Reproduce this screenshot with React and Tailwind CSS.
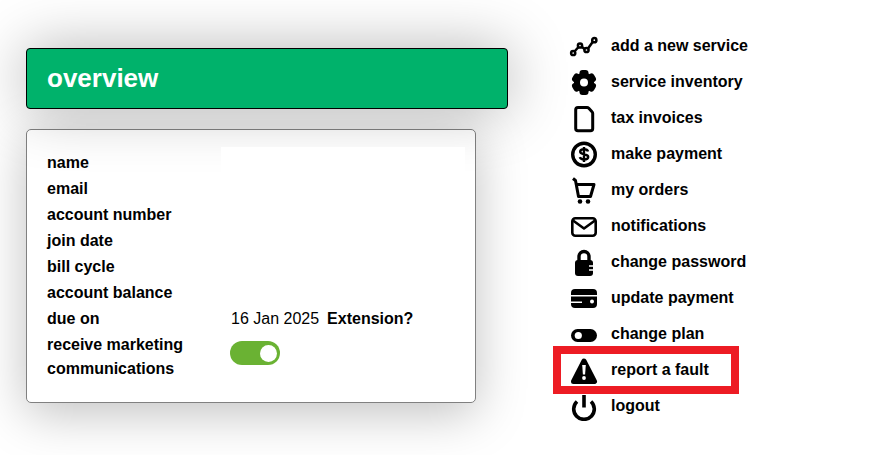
import { useState } from "react";

const iconClass = "w-[30px] h-[30px] text-black shrink-0";

const ChartIcon = () => (
  <svg viewBox="0 0 30 30" className={iconClass} fill="none" stroke="currentColor" strokeWidth="2.500">
    <circle cx="4.200" cy="22" r="2.100" />
    <circle cx="11" cy="14.500" r="2.100" />
    <circle cx="17.500" cy="19" r="2.100" />
    <circle cx="25.300" cy="9.200" r="2.100" />
    <path d="M5.500 20.500 9.500 16M13 16l2.500 2M19 17.500 24 10.500" />
  </svg>
);

const GearIcon = () => (
  <svg viewBox="0 0 30 30" className={iconClass}>
    <g fill="currentColor">
      <circle cx="15" cy="15.500" r="10" />
      <rect x="10.500" y="3" width="9" height="25" rx="3" />
      <rect x="10.500" y="3" width="9" height="25" rx="3" transform="rotate(60 15 15.500)" />
      <rect x="10.500" y="3" width="9" height="25" rx="3" transform="rotate(120 15 15.500)" />
    </g>
    <circle cx="15" cy="15.500" r="4" fill="#fff" />
  </svg>
);

const FileIcon = () => (
  <svg viewBox="0 0 30 30" className={iconClass} fill="none" stroke="currentColor" strokeWidth="3" strokeLinejoin="round">
    <path d="M9 4.500h9c.8 0 1.300.3 1.800.8l3.200 3.400c.5.5.7 1 .7 1.700v15c0 1.500-.8 2.300-2.200 2.300H9c-1.500 0-2.300-.8-2.300-2.300V6.800c0-1.500.8-2.300 2.300-2.300z" />
  </svg>
);

const DollarIcon = () => (
  <svg viewBox="0 0 30 30" className={iconClass}>
    <circle cx="15" cy="15.500" r="11.300" fill="none" stroke="currentColor" strokeWidth="3.400" />
    <path
      d="M19 12.500c-.4-1.500-1.900-2.300-4-2.300-2.300 0-3.800 1-3.800 2.500 0 3.500 8 1.600 8 5.300 0 1.600-1.700 2.500-4.200 2.500-2.200 0-3.700-.8-4.200-2.300M15 8v15"
      fill="none"
      stroke="currentColor"
      strokeWidth="2.400"
    />
  </svg>
);

const CartIcon = () => (
  <svg viewBox="0 0 30 30" className={iconClass}>
    <path d="M4 3.500 6.500 5.500 9.500 21.500h12L25 9.500H7.500" fill="none" stroke="currentColor" strokeWidth="3" strokeLinejoin="round" />
    <circle cx="11" cy="26.500" r="2.300" fill="currentColor" />
    <circle cx="19" cy="26.500" r="2.300" fill="currentColor" />
  </svg>
);

const MailIcon = () => (
  <svg viewBox="0 0 30 30" className={iconClass} fill="none" stroke="currentColor" strokeWidth="2.600" strokeLinejoin="round">
    <rect x="3.300" y="7.300" width="23.400" height="17.400" rx="3" />
    <path d="M4 9.500 15 17.500 26 9.500" />
  </svg>
);

const LockIcon = () => (
  <svg viewBox="0 0 30 30" className={iconClass}>
    <path d="M10 15V9.500a5 5 0 0 1 10 0V15" fill="none" stroke="currentColor" strokeWidth="3.400" />
    <rect x="6" y="13" width="18" height="16" rx="3" fill="currentColor" />
    <path d="M20 19h4M20 23h4" stroke="#fff" strokeWidth="1.300" />
  </svg>
);

const CardIcon = () => (
  <svg viewBox="0 0 30 30" className={iconClass}>
    <rect x="2" y="6" width="26" height="19" rx="4" fill="currentColor" />
    <path d="M2 12.800h26M2 19.300h11" stroke="#fff" strokeWidth="1.600" />
    <circle cx="23" cy="18.500" r="2" fill="#fff" />
  </svg>
);

const ToggleIcon = () => (
  <svg viewBox="0 0 30 30" className={iconClass}>
    <rect x="2" y="10" width="26" height="13" rx="6.500" fill="currentColor" />
    <circle cx="9.300" cy="16.500" r="3.600" fill="#fff" />
  </svg>
);

const WarningIcon = () => (
  <svg viewBox="0 0 30 30" className={iconClass}>
    <path d="M15 6 25.500 26.500H4.500Z" fill="currentColor" stroke="currentColor" strokeWidth="5" strokeLinejoin="round" />
    <path d="M13.200 10h3.600l-.7 9.500h-2.200z" fill="#fff" />
    <circle cx="15" cy="23" r="1.900" fill="#fff" />
  </svg>
);

const PowerIcon = () => (
  <svg viewBox="0 0 30 30" className={iconClass} fill="none" stroke="currentColor" strokeWidth="3.600">
    <path d="M15 4v12.500" />
    <path d="M8 10.500A10.300 10.300 0 1 0 22 10.500" />
  </svg>
);

const menu = [
  { label: "add a new service", icon: ChartIcon },
  { label: "service inventory", icon: GearIcon },
  { label: "tax invoices", icon: FileIcon },
  { label: "make payment", icon: DollarIcon },
  { label: "my orders", icon: CartIcon },
  { label: "notifications", icon: MailIcon },
  { label: "change password", icon: LockIcon },
  { label: "update payment", icon: CardIcon },
  { label: "change plan", icon: ToggleIcon },
  { label: "report a fault", icon: WarningIcon, flagged: true },
  { label: "logout", icon: PowerIcon },
];

const labels = [
  "name",
  "email",
  "account number",
  "join date",
  "bill cycle",
  "account balance",
];

export default function App() {
  const [marketing, setMarketing] = useState(true);

  return (
    <div className="w-[873px] h-[455px] overflow-hidden bg-white flex font-['Liberation_Sans',Arial,sans-serif] text-[16px] text-black">

      {/* Left column */}
      <div className="w-[482px] ml-[26px] pt-[48px] shrink-0">

        <div className="relative z-10 h-[61px] flex items-center pl-[20px] bg-[#00b26b] border border-black rounded-[4px] shadow-[0_0_60px_rgba(0,0,0,0.3)]">
          <h1 className="text-[26px] font-bold text-white">overview</h1>
        </div>

        <div className="w-[450px] h-[274px] mt-[20px] pt-[17px] pl-[20px] bg-white border border-[#808080] rounded-[5px] shadow-[0_10px_50px_rgba(0,0,0,0.25)]">

          <div className="grid grid-cols-[174px_244px]">

            {labels.map((label) => (
              <div key={label} className="contents">
                <div className="relative z-20 h-[26px] pt-[3px] leading-[26px] font-bold">{label}</div>
                <div className="relative z-20 h-[26px] bg-white" />
              </div>
            ))}

            <div className="h-[26px] pt-[3px] leading-[26px] font-bold">due on</div>
            <div className="h-[26px] pt-[3px] leading-[26px] pl-[10px]">
              16 Jan 2025
              <span className="font-bold ml-[8px]">Extension?</span>
            </div>

            <div className="mt-[4px] leading-[24px] font-bold">
              receive marketing
              <br />
              communications
            </div>
            <div className="pl-[9px] pt-[12px]">
              <button
                onClick={() => setMarketing(!marketing)}
                className={`w-[50px] h-[24px] rounded-full bg-[#6ab233] flex items-center px-[3px] ${
                  marketing ? "justify-end" : "justify-start"
                }`}
              >
                <span className="w-[17px] h-[17px] rounded-full bg-white" />
              </button>
            </div>

          </div>
        </div>
      </div>

      {/* Menu */}
      <div className="ml-[61px] pt-[28px] flex flex-col">
        {menu.map((item) => {
          const Icon = item.icon;
          return (
            <div key={item.label} className="relative h-[36px] flex items-center gap-[12px] font-bold">
              <Icon />
              <span className="-mt-[1px]">{item.label}</span>
              {item.flagged && (
                <div className="absolute left-[-16px] top-[-6px] w-[186px] h-[48px] border-[8px] border-[#ed1c24]" />
              )}
            </div>
          );
        })}
      </div>

    </div>
  );
}
